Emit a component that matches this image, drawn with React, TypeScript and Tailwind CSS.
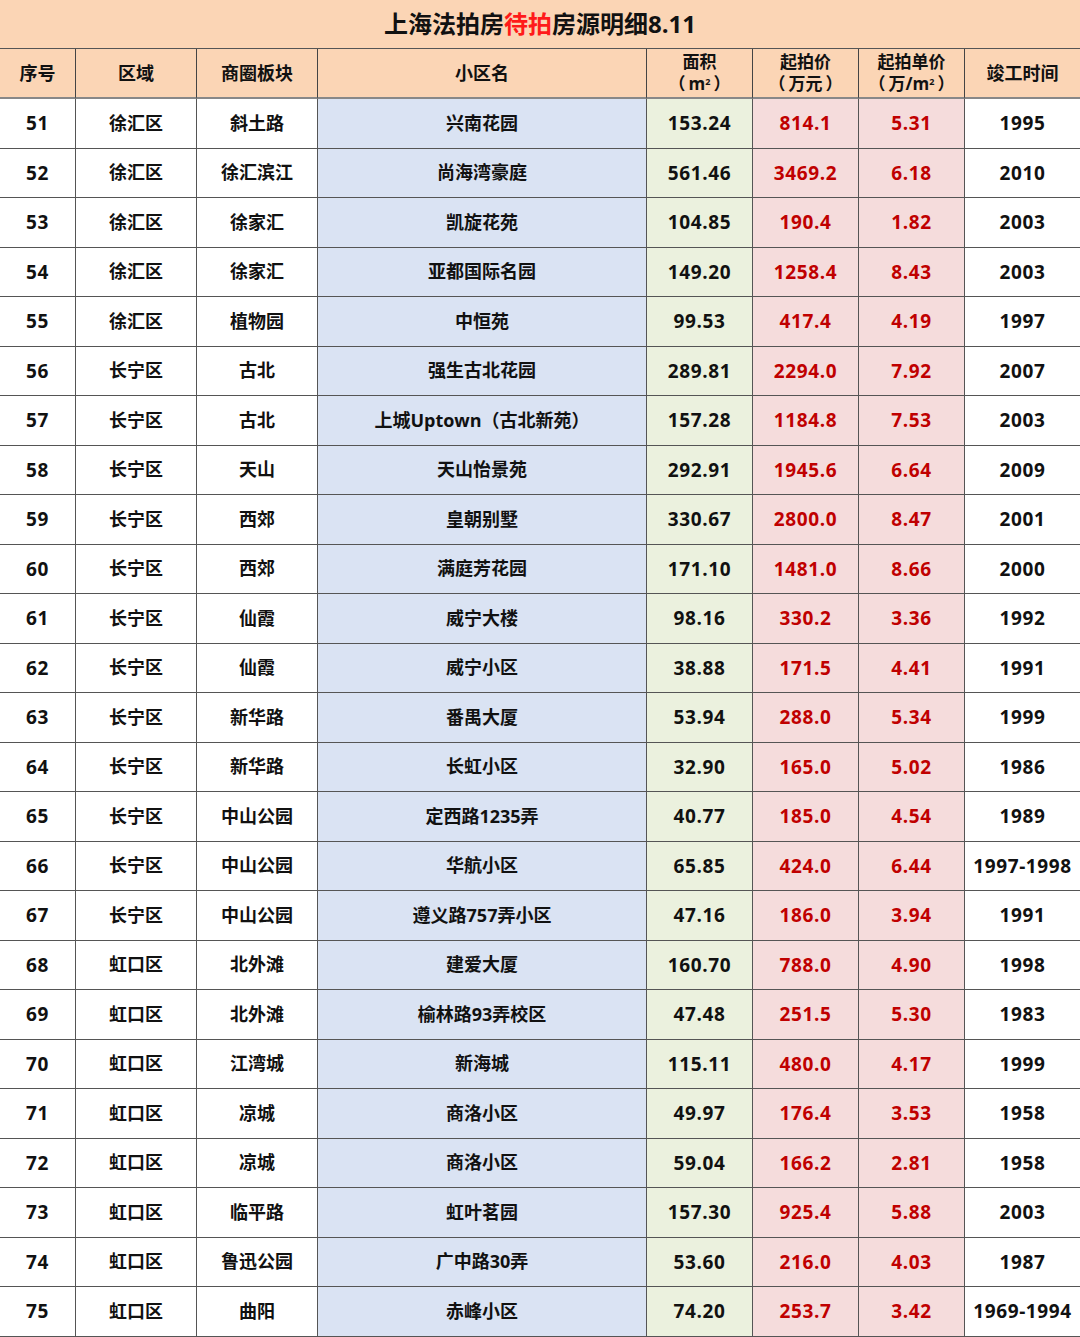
const rows: [string, string, string, string, string, string, string, string][] = [
  ['51', '徐汇区', '斜土路', '兴南花园', '153.24', '814.1', '5.31', '1995'],
  ['52', '徐汇区', '徐汇滨江', '尚海湾豪庭', '561.46', '3469.2', '6.18', '2010'],
  ['53', '徐汇区', '徐家汇', '凯旋花苑', '104.85', '190.4', '1.82', '2003'],
  ['54', '徐汇区', '徐家汇', '亚都国际名园', '149.20', '1258.4', '8.43', '2003'],
  ['55', '徐汇区', '植物园', '中恒苑', '99.53', '417.4', '4.19', '1997'],
  ['56', '长宁区', '古北', '强生古北花园', '289.81', '2294.0', '7.92', '2007'],
  ['57', '长宁区', '古北', '上城Uptown（古北新苑）', '157.28', '1184.8', '7.53', '2003'],
  ['58', '长宁区', '天山', '天山怡景苑', '292.91', '1945.6', '6.64', '2009'],
  ['59', '长宁区', '西郊', '皇朝别墅', '330.67', '2800.0', '8.47', '2001'],
  ['60', '长宁区', '西郊', '满庭芳花园', '171.10', '1481.0', '8.66', '2000'],
  ['61', '长宁区', '仙霞', '威宁大楼', '98.16', '330.2', '3.36', '1992'],
  ['62', '长宁区', '仙霞', '威宁小区', '38.88', '171.5', '4.41', '1991'],
  ['63', '长宁区', '新华路', '番禺大厦', '53.94', '288.0', '5.34', '1999'],
  ['64', '长宁区', '新华路', '长虹小区', '32.90', '165.0', '5.02', '1986'],
  ['65', '长宁区', '中山公园', '定西路1235弄', '40.77', '185.0', '4.54', '1989'],
  ['66', '长宁区', '中山公园', '华航小区', '65.85', '424.0', '6.44', '1997-1998'],
  ['67', '长宁区', '中山公园', '遵义路757弄小区', '47.16', '186.0', '3.94', '1991'],
  ['68', '虹口区', '北外滩', '建爱大厦', '160.70', '788.0', '4.90', '1998'],
  ['69', '虹口区', '北外滩', '榆林路93弄校区', '47.48', '251.5', '5.30', '1983'],
  ['70', '虹口区', '江湾城', '新海城', '115.11', '480.0', '4.17', '1999'],
  ['71', '虹口区', '凉城', '商洛小区', '49.97', '176.4', '3.53', '1958'],
  ['72', '虹口区', '凉城', '商洛小区', '59.04', '166.2', '2.81', '1958'],
  ['73', '虹口区', '临平路', '虹叶茗园', '157.30', '925.4', '5.88', '2003'],
  ['74', '虹口区', '鲁迅公园', '广中路30弄', '53.60', '216.0', '4.03', '1987'],
  ['75', '虹口区', '曲阳', '赤峰小区', '74.20', '253.7', '3.42', '1969-1994'],
]

const cellBg = [
  'bg-white',
  'bg-white',
  'bg-white',
  'bg-[#dae3f3]',
  'bg-[#ebf1de]',
  'bg-[#f5dcdc]',
  'bg-[#f5dcdc]',
  'bg-white',
]

// numeric columns get a touch more size and spacing, like the Segoe digits
const cellText = [
  'text-[#111] text-[19px] tracking-[0.6px]',
  'text-[#111] text-[18px]',
  'text-[#111] text-[18px]',
  'text-[#111] text-[18px]',
  'text-[#111] text-[19px] tracking-[0.6px]',
  'text-[#c00000] text-[19px] tracking-[0.6px]',
  'text-[#c00000] text-[19px] tracking-[0.6px]',
  'text-[#111] text-[19px] tracking-[0.6px]',
]

function Sq() {
  return (
    <span>
      m<sup className="text-[9px] -top-[0.6em]">2</sup>
    </span>
  )
}

// unit line under a header, wrapped in wide parens
function Unit({ children }: { children: React.ReactNode }) {
  return (
    <span className="flex items-center">
      <span>（</span>
      <span className="mx-[3px]">{children}</span>
      <span>）</span>
    </span>
  )
}

const head = 'h-[50px] bg-[#fbd5b5] border-b-2 border-b-[#888] flex items-center justify-center text-[#111]'

export default function App() {
  return (
    <div className="w-[1080px] h-[1337px] overflow-hidden bg-white font-['Open_Sans','Noto_Sans_CJK_SC',sans-serif] font-bold">
      <div className="h-[49px] bg-[#fbd5b5] border-b border-[#555] flex items-center justify-center text-[24px] text-[#111]">
        <span>上海法拍房</span>
        <span className="text-[#ff1a1a]">待拍</span>
        <span>房源明细8.11</span>
      </div>

      <div className="grid grid-cols-[76px_121px_121px_329px_106px_106px_106px_115px]">
        <div className={head + ' border-r border-r-[#444] text-[18px]'}>序号</div>
        <div className={head + ' border-r border-r-[#444] text-[18px]'}>区域</div>
        <div className={head + ' border-r border-r-[#444] text-[18px]'}>商圈板块</div>
        <div className={head + ' border-r border-r-[#444] text-[18px]'}>小区名</div>
        <div className={head + ' border-r border-r-[#444] flex-col text-[17px] leading-[22px]'}>
          <span>面积</span>
          <Unit><Sq /></Unit>
        </div>
        <div className={head + ' border-r border-r-[#444] flex-col text-[17px] leading-[22px]'}>
          <span>起拍价</span>
          <Unit>万元</Unit>
        </div>
        <div className={head + ' border-r border-r-[#444] flex-col text-[17px] leading-[22px]'}>
          <span>起拍单价</span>
          <Unit>万/<Sq /></Unit>
        </div>
        <div className={head + ' text-[18px]'}>竣工时间</div>

        {rows.map((row) =>
          row.map((val, i) => (
            <div
              key={row[0] + '-' + i}
              className={
                'h-[49.5px] border-b border-[#555] flex items-center justify-center whitespace-nowrap ' +
                (i < 7 ? 'border-r ' : '') +
                cellBg[i] +
                ' ' +
                cellText[i]
              }
            >
              {val}
            </div>
          ))
        )}
      </div>
    </div>
  )
}
